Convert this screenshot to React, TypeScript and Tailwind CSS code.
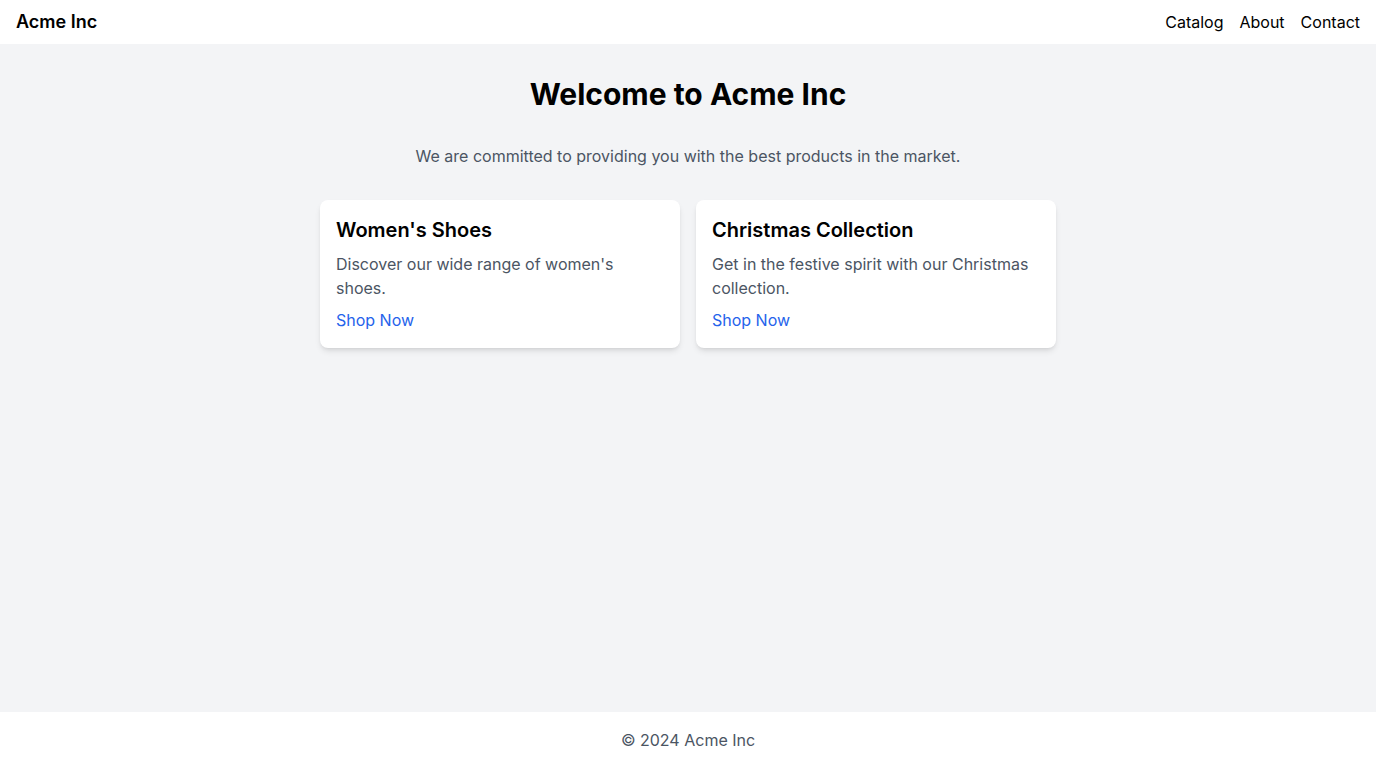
import React from "react";

const CARDS = [
  {
    title: "Women's Shoes",
    text: "Discover our wide range of women's shoes.",
  },
  {
    title: "Christmas Collection",
    text: "Get in the festive spirit with our Christmas collection.",
  },
];

export default function App() {
  return (
    <div className="flex min-h-screen flex-col bg-[#f3f4f6] font-['Inter',sans-serif] text-black">
      <header className="flex items-center justify-between bg-white px-4 py-2">
        <span className="text-lg font-semibold">Acme Inc</span>
        <nav className="flex gap-4 text-base">
          <a href="#">Catalog</a>
          <a href="#">About</a>
          <a href="#">Contact</a>
        </nav>
      </header>

      <main className="flex-1 px-4 py-8">
        <h1 className="text-center text-3xl font-bold">Welcome to Acme Inc</h1>
        <p className="mt-8 text-center text-base text-[#4b5563]">
          We are committed to providing you with the best products in the market.
        </p>
        <div className="mx-auto mt-8 grid max-w-3xl grid-cols-2 gap-4 px-4">
          {CARDS.map((card) => (
            <div key={card.title} className="rounded-lg bg-white p-4 shadow-md">
              <h2 className="text-xl font-semibold">{card.title}</h2>
              <p className="mt-2 text-[#4b5563]">{card.text}</p>
              <a href="#" className="mt-2 block text-[#2563eb]">
                Shop Now
              </a>
            </div>
          ))}
        </div>
      </main>

      <footer className="bg-white py-4 text-center text-[#4b5563]">
        © 2024 Acme Inc
      </footer>
    </div>
  );
}
